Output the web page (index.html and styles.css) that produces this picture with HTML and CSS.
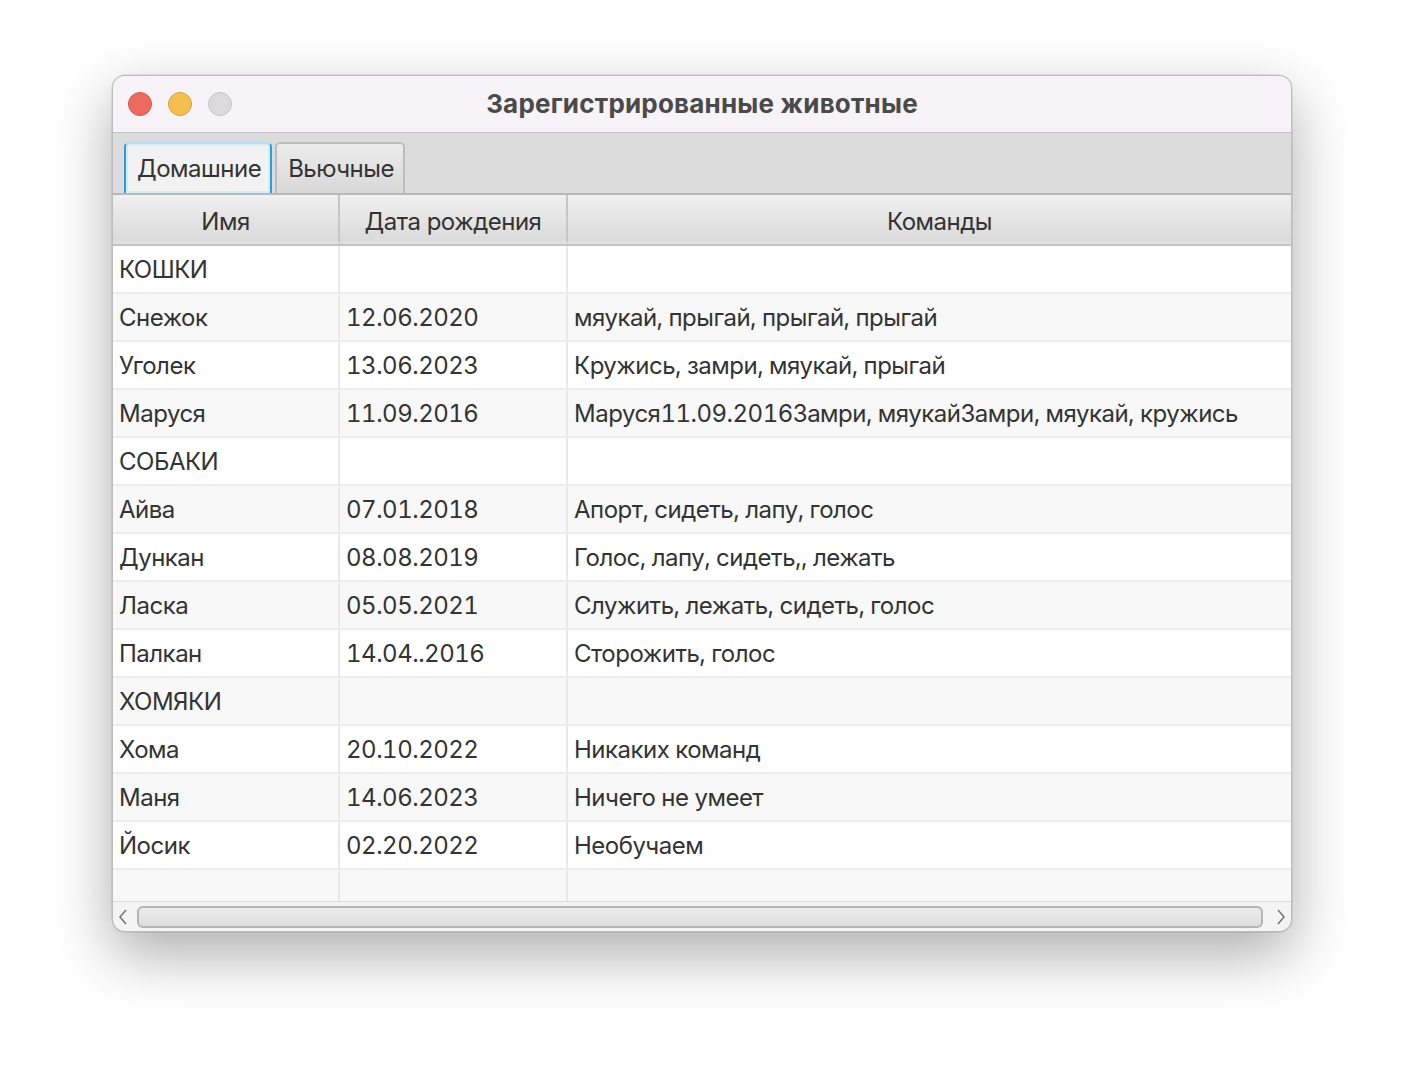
FILE: index.html
```html
<!DOCTYPE html>
<html lang="ru">
<head>
<meta charset="utf-8">
<link rel="stylesheet" href="styles.css">
</head>
<body>
<div class="stage">
  <div class="window">
    <div class="titlebar">
      <div class="lights">
        <span class="light red"></span>
        <span class="light yellow"></span>
        <span class="light gray"></span>
      </div>
      <div class="title">Зарегистрированные животные</div>
    </div>
    <div class="tabbar">
      <div class="tab active">Домашние</div>
      <div class="tab">Вьючные</div>
    </div>
    <div class="table">
      <div class="thead">
        <div class="th">Имя</div>
        <div class="th">Дата рождения</div>
        <div class="th">Команды</div>
      </div>
      <div class="row"><div class="td">КОШКИ</div><div class="td"></div><div class="td"></div></div>
      <div class="row alt"><div class="td">Снежок</div><div class="td">12.06.2020</div><div class="td">мяукай, прыгай, прыгай, прыгай</div></div>
      <div class="row"><div class="td">Уголек</div><div class="td">13.06.2023</div><div class="td">Кружись, замри, мяукай, прыгай</div></div>
      <div class="row alt"><div class="td">Маруся</div><div class="td">11.09.2016</div><div class="td">Маруся11.09.2016Замри, мяукайЗамри, мяукай, кружись</div></div>
      <div class="row"><div class="td">СОБАКИ</div><div class="td"></div><div class="td"></div></div>
      <div class="row alt"><div class="td">Айва</div><div class="td">07.01.2018</div><div class="td">Апорт, сидеть, лапу, голос</div></div>
      <div class="row"><div class="td">Дункан</div><div class="td">08.08.2019</div><div class="td">Голос, лапу, сидеть,, лежать</div></div>
      <div class="row alt"><div class="td">Ласка</div><div class="td">05.05.2021</div><div class="td">Служить, лежать, сидеть, голос</div></div>
      <div class="row"><div class="td">Палкан</div><div class="td">14.04..2016</div><div class="td">Сторожить, голос</div></div>
      <div class="row alt"><div class="td">ХОМЯКИ</div><div class="td"></div><div class="td"></div></div>
      <div class="row"><div class="td">Хома</div><div class="td">20.10.2022</div><div class="td">Никаких команд</div></div>
      <div class="row alt"><div class="td">Маня</div><div class="td">14.06.2023</div><div class="td">Ничего не умеет</div></div>
      <div class="row"><div class="td">Йосик</div><div class="td">02.20.2022</div><div class="td">Необучаем</div></div>
      <div class="row alt last"><div class="td"></div><div class="td"></div><div class="td"></div></div>
    </div>
    <div class="scrollbar">
      <svg class="arrow" width="12" height="18" viewBox="0 0 12 18"><path d="M9 2 L3 9 L9 16" fill="none" stroke="#777" stroke-width="1.6"/></svg>
      <div class="thumb"></div>
      <svg class="arrow" width="12" height="18" viewBox="0 0 12 18"><path d="M3 2 L9 9 L3 16" fill="none" stroke="#777" stroke-width="1.6"/></svg>
    </div>
  </div>
</div>
</body>
</html>
```

FILE: styles.css
```css
* { box-sizing: border-box; }
html, body { margin: 0; padding: 0; background: #ffffff; }
body {
  font-family: Inter, "Noto Sans", "Liberation Sans", sans-serif;
  color: #333333;
  width: 1404px;
  height: 1080px;
  overflow: hidden;
}
.stage {
  padding: 75px 112px 0 112px;
}
.window {
  width: 1180px;
  height: 857px;
  border-radius: 13px;
  overflow: hidden;
  background: #dcdcdc;
  border: 1px solid #bdbdbd;
  box-shadow: 0 22px 60px rgba(0,0,0,0.33), 0 0 0 0.5px rgba(0,0,0,0.15);
  display: flex;
  flex-direction: column;
}
.titlebar {
  height: 57px;
  flex: none;
  background: #f7f3f9;
  border-bottom: 1px solid #c3c3c3;
  position: relative;
  display: flex;
  align-items: center;
  justify-content: center;
}
.lights {
  position: absolute;
  left: 15px;
  top: 16px;
  display: flex;
  gap: 16px;
}
.light {
  width: 24px;
  height: 24px;
  border-radius: 50%;
  display: block;
}
.red { background: #ed6a5e; border: 1px solid #d5574c; }
.yellow { background: #f5bf4f; border: 1px solid #d8a23a; }
.gray { background: #dddadf; border: 1px solid #c8c5ca; }
.title {
  font-weight: 700;
  font-size: 26px;
  color: #4a4a4a;
  letter-spacing: 0.2px;
  margin-top: -2px;
}
.tabbar {
  height: 62px;
  flex: none;
  background: #dcdcdc;
  display: flex;
  align-items: flex-end;
  padding-left: 11px;
  gap: 3px;
  border-bottom: 2px solid #b9b9b9;
}
.tab {
  height: 51px;
  padding: 0 9px 0 11px;
  display: flex;
  align-items: center;
  font-size: 24px;
  letter-spacing: -0.5px;
  color: #333;
  border: 2px solid #bdbdbd;
  border-bottom: none;
  border-radius: 5px 5px 0 0;
  background: linear-gradient(#ececec, #d8d8d8);
}
.tab.active {
  background: #f2f2f2;
  border: 2px solid #2f9be0;
  border-top: 2px solid #b8dcf2;
  border-bottom: none;
  box-shadow: inset 0 0 0 2px #d6ecf8;
}
.table {
  flex: 1;
  background: #ffffff;
  display: flex;
  flex-direction: column;
  overflow: hidden;
}
.thead {
  display: grid;
  grid-template-columns: 227px 228px 743px;
  width: 1198px;
  height: 51px;
  border-bottom: 2px solid #c2c2c2;
}
.th {
  display: flex;
  align-items: center;
  justify-content: center;
  padding-top: 6px;
  font-size: 24px;
  letter-spacing: -0.5px;
  color: #333;
  background: linear-gradient(#f0f0f0, #dadada);
  border-right: 2px solid #c6c6c6;
  border-bottom: 3px solid #e0e0e0;
}
.th:last-child { border-right: none; }
.row {
  display: grid;
  grid-template-columns: 227px 228px 743px;
  width: 1198px;
  height: 48px;
  background: #ffffff;
  border-bottom: 2px solid #ececec;
}
.row.alt { background: #f8f8f8; }
.row.last { flex: 1; border-bottom: none; }
.td {
  display: flex;
  align-items: center;
  padding-left: 6px;
  font-size: 24px;
  letter-spacing: -0.5px;
  font-variant-numeric: tabular-nums;
  color: #333;
  border-right: 2px solid #e9e9e9;
  white-space: nowrap;
}
.td:last-child { border-right: none; }
.scrollbar {
  height: 30px;
  flex: none;
  background: #f4f4f4;
  border-top: 1px solid #dcdcdc;
  display: flex;
  align-items: center;
  padding: 0 4px;
  gap: 4px;
}
.arrow { flex: none; }
.thumb {
  flex: 1;
  height: 22px;
  margin: 0 8px 0 4px;
  border: 2px solid #b4b4b4;
  border-radius: 6px;
  background: linear-gradient(#ececec, #dedede);
}
```
